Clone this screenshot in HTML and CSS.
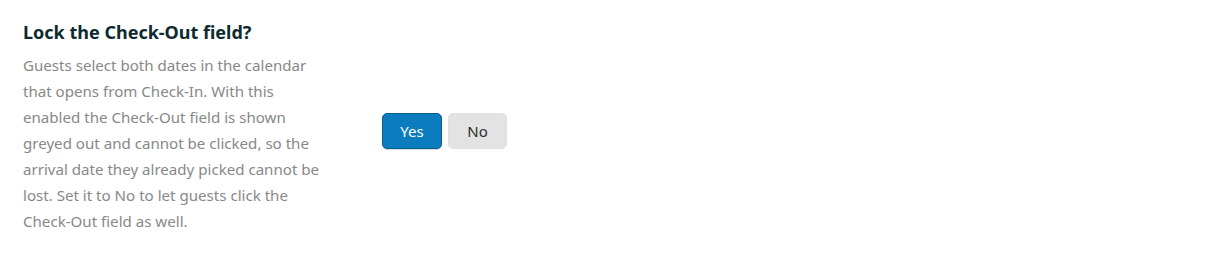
FILE: index.html
```html
<!DOCTYPE html>
<html>
<head>
<meta charset="utf-8">
<link rel="stylesheet" href="styles.css">
</head>
<body>
<div class="row">
  <div class="info">
    <h3 class="title">Lock the Check-Out field?</h3>
    <p class="desc">Guests select both dates in the calendar that opens from Check-In. With this enabled the Check-Out field is shown greyed out and cannot be clicked, so the arrival date they already picked cannot be lost. Set it to No to let guests click the Check-Out field as well.</p>
  </div>
  <div class="toggle">
    <button class="btn btn-yes">Yes</button>
    <button class="btn btn-no">No</button>
  </div>
</div>
</body>
</html>
```
FILE: styles.css
```css
html, body {
  margin: 0;
  padding: 0;
  background: #ffffff;
}
body {
  font-family: "Noto Sans", "Open Sans", sans-serif;
}
.row {
  display: flex;
  align-items: center;
  padding: 18px 0 0 23px;
  gap: 59px;
}
.info {
  width: 300px;
}
.title {
  margin: 0;
  font-size: 18px;
  font-weight: 700;
  color: #0d2a2f;
  line-height: 28px;
}
.desc {
  margin: 6px 0 0;
  font-size: 15.1px;
  line-height: 26px;
  color: #888888;
}
.toggle {
  display: flex;
  gap: 6px;
  margin-top: 10px;
}
.btn {
  font-family: inherit;
  font-size: 15px;
  height: 36px;
  border-radius: 5px;
  padding: 0;
  cursor: pointer;
}
.btn-yes {
  width: 60px;
  background: #0b7cbe;
  border: 1px solid #0a5d8f;
  color: #ffffff;
  box-shadow: 0 1px 1px rgba(0, 0, 0, 0.15);
}
.btn-no {
  width: 59px;
  background: #e3e3e3;
  border: 1px solid #e0e0e0;
  color: #2a2a2a;
}
```
